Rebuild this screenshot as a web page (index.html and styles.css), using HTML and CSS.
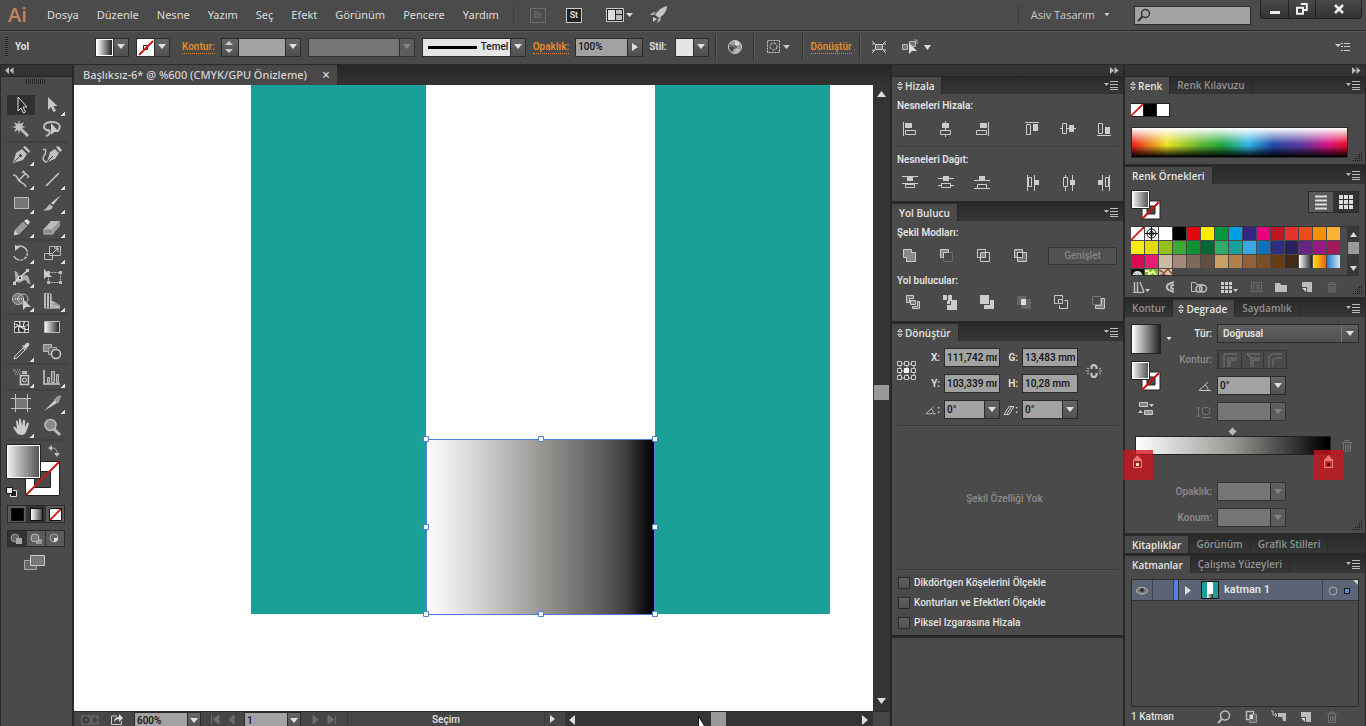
FILE: index.html
```html
<!DOCTYPE html>
<html lang="tr">
<head>
<meta charset="utf-8">
<title>Başlıksız-6</title>
<link rel="stylesheet" href="styles.css">
</head>
<body>
<svg class="defs" width="0" height="0" aria-hidden="true">
  <defs>
    <linearGradient id="gBW"><stop offset="0" stop-color="#fff"/><stop offset="1" stop-color="#222"/></linearGradient>
    <linearGradient id="gSoft"><stop offset="0" stop-color="#eee"/><stop offset="1" stop-color="#555"/></linearGradient>
    <linearGradient id="gArt"><stop offset="0" stop-color="#fff"/><stop offset=".25" stop-color="#cfcfcf"/><stop offset=".5" stop-color="#989793"/><stop offset=".75" stop-color="#626262"/><stop offset=".88" stop-color="#3d3d3d"/><stop offset=".95" stop-color="#151515"/><stop offset="1" stop-color="#000"/></linearGradient>
    <linearGradient id="gFace" x2="0" y2="1"><stop offset="0" stop-color="#7a7a7a"/><stop offset="1" stop-color="#999"/></linearGradient>
  </defs>
  <symbol id="caret" viewBox="0 0 8 6"><path d="M0 0h8L4 5z" fill="currentColor"/></symbol>
  <symbol id="menu" viewBox="0 0 14 9"><path d="M0 2h5L2.500 5z" fill="#bbb"/><path d="M6 .5h8M6 3.500h8M6 6.500h8M6 8.500h8" stroke="#bbb"/></symbol>
  <symbol id="cycle" viewBox="0 0 6 10"><path d="M.8 3.700L3 1l2.200 2.700zM.8 6.300L3 9l2.200-2.700z" fill="none" stroke="#ddd"/></symbol>
  <symbol id="grip" viewBox="0 0 10 10"><path d="M8 0h1v1h-1zM6 2h1v1h-1zM8 2h1v1h-1zM4 4h1v1h-1zM6 4h1v1h-1zM8 4h1v1h-1zM2 6h1v1h-1zM4 6h1v1h-1zM6 6h1v1h-1zM8 6h1v1h-1zM0 8h1v1h-1zM2 8h1v1h-1zM4 8h1v1h-1zM6 8h1v1h-1zM8 8h1v1h-1z" fill="#151515"/></symbol>
  <symbol id="trash" viewBox="0 0 12 13"><path d="M1 3.500h10M4 3V1.500h4V3M2.500 4v8h7V4M4.500 5.500v5M6.500 5.500v5M8 5.500v5" fill="none" stroke="#737373"/></symbol>
  <symbol id="newitem" viewBox="0 0 12 12"><path d="M1 1h10v10H6V6H1z" fill="#bdbdbd"/><path d="M1 7h4v4z" fill="#ddd"/></symbol>
  <symbol id="fs" viewBox="0 0 30 30"><path d="M11 11h18v18H11z" fill="#fff" stroke="#222"/><path d="M16 16h8v8h-8z" fill="#4a4a4a" stroke="#222"/><path d="M11.500 28.500L28 12" stroke="#d01010" stroke-width="2"/><path d="M.5 .5h18v18H.5z" fill="#fff" stroke="#222"/><path d="M2 2h15v15H2z" fill="url(#gSoft)"/></symbol>
  <symbol id="none" viewBox="0 0 14 14"><path d="M0 0h14v14H0z" fill="#fff"/><path d="M0 14L14 0" stroke="#d81818" stroke-width="2"/></symbol>
  <symbol id="angle" viewBox="0 0 14 12"><path d="M1 10.500h12M1 10.500L10 2M7 5c2 1 3 3 3 5" fill="none" stroke="#c8c8c8"/></symbol>
</svg>

<div class="app">
  <header class="menubar">
    <span class="logo">Ai</span>
    <nav class="menus">
      <button>Dosya</button><button>Düzenle</button><button>Nesne</button><button>Yazım</button><button>Seç</button><button>Efekt</button><button>Görünüm</button><button>Pencere</button><button>Yardım</button>
    </nav>
    <div class="apptools">
      <button class="sq dim">Br</button>
      <button class="sq lit">St</button>
      <button aria-label="Düzen" class="arr"><svg width="27" height="16"><path d="M.5 1.500h17v13H.5z" fill="#222" stroke="#ccc"/><path d="M2 3h7v10H2z" fill="#ddd"/><path d="M10 3h6v4h-6zM10 8h6v5h-6z" fill="#bbb"/><path d="M20 6h7l-3.500 4z" fill="#ddd"/></svg></button>
      <button aria-label="Paylaş"><svg width="20" height="18"><path d="M18 0c-5 1-9 4-12 9l4 3c5-3 8-7 8-12z" fill="#c4c4c4"/><path d="M7 6C4 6 2 7 1 9l4 0zM12 11c0 3-1 5-4 6l1-4z" fill="#aaa"/><path d="M4 11l4 2-4 3z" fill="#ccc"/></svg></button>
    </div>
    <div class="account">
      <button class="user">Asiv Tasarım <svg width="6" height="4" viewBox="0 0 8 6"><use href="#caret"/></svg></button>
      <label class="search"><svg width="14" height="14"><circle cx="8.500" cy="5.500" r="4" fill="none" stroke="#333" stroke-width="1.500"/><path d="M5.500 8.500L1 13" stroke="#333" stroke-width="2"/></svg><input type="text" aria-label="Ara"></label>
      <div class="win">
        <button aria-label="Simge durumuna küçült"><svg width="12" height="12"><path d="M1 8h10v3H1z" fill="#eee"/></svg></button>
        <button aria-label="Geri yükle"><svg width="12" height="12"><path d="M4.800 1h6v6h-3M1 4.800h6v6H1z" fill="none" stroke="#eee" stroke-width="2"/></svg></button>
        <button class="close" aria-label="Kapat"><svg width="12" height="12"><path d="M2 2l8 8M10 2l-8 8" stroke="#eee" stroke-width="2.500"/></svg></button>
      </div>
    </div>
  </header>

  <div class="control">
    <span class="dots"></span>
    <span class="kind">Yol</span>
    <span class="drop fillpick"><svg width="17" height="17"><path d="M0 0h17v17H0z" fill="#fff"/><path d="M1 1h15v15H1z" fill="url(#gBW)"/></svg><button aria-label="Dolgu"><svg class="c"><use href="#caret"/></svg></button></span>
    <span class="drop strokepick"><svg width="17" height="17"><path d="M0 0h17v17H0z" fill="#fff"/><path d="M6.500 6.500h4v4h-4z" fill="#fff" stroke="#222"/><path d="M2 16L16 2" stroke="#d01818" stroke-width="2"/></svg><button aria-label="Kontur rengi"><svg class="c"><use href="#caret"/></svg></button></span>
    <a class="link" href="#kontur">Kontur:</a>
    <span class="combo weight"><button class="spin" aria-label="Artır / azalt"><svg width="9" height="14"><path d="M0 5h8L4 1zM0 9h8l-4 4z" fill="#ccc"/></svg></button><input type="text" aria-label="Kontur kalınlığı"><button aria-label="Kalınlık listesi"><svg class="c"><use href="#caret"/></svg></button></span>
    <span class="combo profile off"><input type="text" aria-label="Genişlik profili" disabled><button disabled aria-label="Profil listesi"><svg class="c"><use href="#caret"/></svg></button></span>
    <span class="combo brush"><span class="brushface"><i></i>Temel</span><button aria-label="Fırça"><svg class="c"><use href="#caret"/></svg></button></span>
    <a class="link" href="#opaklik">Opaklık:</a>
    <span class="combo opacity"><input type="text" value="100%" aria-label="Opaklık"><button aria-label="Opaklık kaydırıcısı"><svg width="6" height="8"><path d="M0 0v8l6-4z" fill="#ddd"/></svg></button></span>
    <span class="lbl stil">Stil:</span>
    <span class="drop style"><i></i><button aria-label="Stil"><svg class="c"><use href="#caret"/></svg></button></span>
    <span class="rule"></span>
    <button class="wheel" aria-label="Yeniden renklendir"><svg width="16" height="16"><circle cx="8" cy="8" r="6.500" fill="#999" stroke="#ccc"/><path d="M8 8V2a6 6 0 0 1 5 3z" fill="#ddd"/><path d="M8 8L2 8a6 6 0 0 0 3 5z" fill="#444"/><path d="M8 8l5 3a6 6 0 0 1-5 3z" fill="#bbb"/><path d="M8 8L3 5a6 6 0 0 0-1 3z" fill="#666"/><circle cx="8" cy="8" r="2" fill="#666"/></svg></button>
    <span class="rule"></span>
    <button class="alignto" aria-label="Hizala"><svg width="25" height="16"><path d="M1.500 1.500h12v12h-12z" fill="none" stroke="#ccc" stroke-dasharray="2 1"/><circle cx="7.500" cy="7.500" r="3.500" fill="none" stroke="#ccc" stroke-dasharray="3 1"/><path d="M17 6h7l-3.500 4z" fill="#ccc"/></svg></button>
    <span class="rule"></span>
    <a class="link transform" href="#donustur">Dönüştür</a>
    <span class="rule"></span>
    <button class="isolate" aria-label="Yalıt"><svg width="16" height="14"><path d="M4.500 4.500h7v5h-7z" fill="#777" stroke="#ccc"/><path d="M1 1l3 3M15 1l-3 3M1 13l3-3M15 13l-3-3M1 4h3M12 4h3M1 10h3M12 10h3" stroke="#ccc"/></svg></button>
    <button class="similar" aria-label="Benzerleri seç"><svg width="31" height="16"><path d="M1.500 5.500h5v5h-5zM8.500 2.500h6v5h-6z" fill="#777" stroke="#bbb"/><path d="M8 4v11l3-3 5 0z" fill="#ddd"/><path d="M13 1h3v4" fill="none" stroke="#aaa"/><path d="M23 6h7l-3.500 5z" fill="#ddd"/></svg></button>
    <button class="ctlmenu" aria-label="Menü"><svg width="15" height="10"><path d="M0 2h6L3 5z" fill="#ccc"/><path d="M6 1.500h2M6 4.500h2M6 8.500h2M9 1.500h6M9 4.500h6M9 8.500h6" stroke="#ccc"/></svg></button>
  </div>

  <div class="work">
    <aside class="tools">
      <div class="strip left"><svg width="9" height="7"><path d="M4 0v7L0 3.500zM8.500 0v7l-4-3.500z" fill="#bbb"/></svg></div>
      <div class="handle"></div>
      <div class="toolgrid">
        <button class="on" aria-label="Seçim"><svg viewBox="0 0 20 20"><path d="M7 2v14l3-3 2.500 5 2-1-2.500-5h4z" fill="#2c2c2c" stroke="#ddd"/></svg></button>
        <button class="more" aria-label="Doğrudan Seçim"><svg viewBox="0 0 20 20"><path d="M6 2v13l3-3 2.500 5 2.500-1-2.500-5h4z" fill="#c4c4c4"/></svg></button>
        <button aria-label="Sihirli Değnek"><svg viewBox="0 0 20 20"><path d="M8 1l1 4 4-2-2 4 4 1-4 1 7 7-2 2-7-7-1 4-1-4-4 2 2-4-4-1 4-1-2-4 4 2z" fill="#c0c0c0"/></svg></button>
        <button aria-label="Kement"><svg viewBox="0 0 20 20"><path d="M7 12c-8-2-6-9 3-9 8 0 10 6 5 9M6 11c3 1 2 5-2 6" fill="none" stroke="#bbb" stroke-width="2"/><path d="M9 4v12l3-3h5z" fill="#ccc"/></svg></button>
      </div>
      <div class="toolgrid">
        <button class="more" aria-label="Kalem"><svg viewBox="0 0 20 20"><path d="M2 18L5 8l6-4 5 5-4 6z" fill="#c0c0c0"/><path d="M12 2l2-1 5 5-1 2z" fill="#ccc"/><path d="M3 17l6-6" stroke="#444"/><circle cx="9.500" cy="10.500" r="1.500" fill="#444"/></svg></button>
        <button aria-label="Eğrilik"><svg viewBox="0 0 20 20"><path d="M5 17L8 7l5-3 4 4-4 6z" fill="#c0c0c0"/><path d="M14 2l2-1 4 4-2 2z" fill="#ccc"/><path d="M6 16l5-5" stroke="#444"/><path d="M1 5c4-3 3 3 1 6s0 6 3 6" fill="none" stroke="#bbb" stroke-width="1.500"/></svg></button>
        <button class="more" aria-label="Yol Üzerinde Yazı"><svg viewBox="0 0 20 20"><path d="M2 6c5 0 4 4 6 6s6 2 7 6M8 11l7-7M12 2l6 6M6 9l4 4M11 4l2-2M16 9l2-2" fill="none" stroke="#c0c0c0" stroke-width="1.500"/></svg></button>
        <button class="more" aria-label="Çizgi"><svg viewBox="0 0 20 20"><path d="M4 17L17 4" stroke="#c8c8c8" stroke-width="1.500"/></svg></button>
        <button class="more" aria-label="Dikdörtgen"><svg viewBox="0 0 20 20"><path d="M3.500 4.500h14v11h-14z" fill="#777" stroke="#bbb"/></svg></button>
        <button class="more" aria-label="Boya Fırçası"><svg viewBox="0 0 20 20"><path d="M19 2L9 10l2 2z" fill="#ccc"/><path d="M8 11l3 3c-2 4-6 4-10 3 4-1 4-4 7-6z" fill="#b8b8b8"/></svg></button>
        <button class="more" aria-label="Kurşun Kalem"><svg viewBox="0 0 20 20"><path d="M3 18l1-5 8-8 4 4-8 8z" fill="#999" stroke="#bbb" stroke-width=".5"/><path d="M13 4l3-2 3 3-2 3z" fill="#ddd"/><path d="M3 18l1-4 3 3z" fill="#ddd"/></svg></button>
        <button class="more" aria-label="Silgi"><svg viewBox="0 0 20 20"><path d="M2 12l7-8h9l-7 8z" fill="#bbb"/><path d="M2 12h9v5H2z" fill="#888" stroke="#bbb"/><path d="M11 12l7-8v5l-7 8z" fill="#999"/></svg></button>
      </div>
      <div class="toolgrid">
        <button class="more" aria-label="Döndür"><svg viewBox="0 0 20 20"><path d="M6 4a7 7 0 1 1-3 9" fill="none" stroke="#c0c0c0" stroke-width="1.500" stroke-dasharray="13 1 3 1 3 1 3 1"/><path d="M4 2v6l5-4z" fill="#ccc"/></svg></button>
        <button class="more" aria-label="Ölçekle"><svg viewBox="0 0 20 20"><path d="M7.500 3.500h11v9h-11zM2.500 10.500h8v6h-8z" fill="none" stroke="#bbb"/><path d="M11 10l5-5M12 5h4v4" fill="none" stroke="#ddd"/></svg></button>
        <button class="more" aria-label="Genişlik"><svg viewBox="0 0 20 20"><path d="M3 4c6 0 3 6 6 6s5-4 8-1c2 3 1 6 3 8-5 0-4-4-6-4s-5 4-8 2-1-7-3-11z" fill="#aaa"/><path d="M3 16L16 4" stroke="#ddd" stroke-width="1.500"/><path d="M2 15h3v3H2zM15 2h3v3h-3z" fill="#ccc"/><circle cx="9" cy="11" r="2" fill="#444" stroke="#fff"/></svg></button>
        <button aria-label="Serbest Dönüştür"><svg viewBox="0 0 20 20"><path d="M6.500 5.500h12v10h-12z" fill="none" stroke="#bbb" stroke-dasharray="2 1"/><path d="M5 4h3v3H5zM17 4h3v3h-3zM5 14h3v3H5zM17 14h3v3h-3z" fill="#bbb"/><path d="M2 2v10l2-2h6z" fill="#ccc"/></svg></button>
        <button class="more" aria-label="Şekil Oluşturucu"><svg viewBox="0 0 20 20"><circle cx="7" cy="8" r="5.500" fill="#777" stroke="#bbb"/><circle cx="12" cy="8" r="5" fill="none" stroke="#bbb"/><path d="M4 8h9" stroke="#fff" stroke-dasharray="1 1"/><path d="M12 8v11l3-3h5z" fill="#ccc"/></svg></button>
        <button class="more" aria-label="Perspektif Izgarası"><svg viewBox="0 0 20 20"><path d="M2 2h7v7l9 5v3H2z" fill="#999"/><path d="M3 2v15h15M6 3v14M9 3v14M3 6l6 1M3 9l10 3M3 13l14 3" fill="none" stroke="#d0d0d0"/><path d="M4.500 3v14M7.500 3v14" stroke="#444"/></svg></button>
      </div>
      <div class="toolgrid">
        <button aria-label="Kafes"><svg viewBox="0 0 20 20"><path d="M3.500 4.500h14v11h-14z" fill="#333" stroke="#ccc"/><path d="M4 11c4-6 9 3 13-4M4 7c4 0 10 8 13 5M8 5c4 3-4 7 1 10M14 5c-5 3 3 7-1 10" fill="none" stroke="#ddd" stroke-width="1.200"/></svg></button>
        <button aria-label="Degrade"><svg viewBox="0 0 20 20"><path d="M2.500 4.500h15v11h-15z" fill="url(#gBW)" stroke="#bbb"/></svg></button>
        <button class="more" aria-label="Damlalık"><svg viewBox="0 0 20 20"><path d="M3 18l1-3 8-8 2 2-8 8z" fill="#555" stroke="#ccc"/><path d="M11 5l1-1 1 1c1-3 4-4 5-3s0 4-3 5l1 1-1 1z" fill="#ccc"/></svg></button>
        <button aria-label="Karışım"><svg viewBox="0 0 20 20"><path d="M1.500 3.500h8v7h-8z" fill="#888" stroke="#bbb"/><path d="M6.500 6.500h8v7h-8z" fill="#666" stroke="#aaa"/><circle cx="14" cy="13" r="4.500" fill="#444" stroke="#ccc" stroke-width="1.500"/></svg></button>
      </div>
      <div class="toolgrid">
        <button class="more" aria-label="Sembol Püskürtücü"><svg viewBox="0 0 20 20"><path d="M9.500 8.500h8v9h-8z" fill="none" stroke="#ccc" stroke-width="1.500"/><path d="M11 4h5v3h-5z" fill="#bbb"/><circle cx="13.500" cy="13" r="2" fill="none" stroke="#ddd"/><path d="M2 3h8M3 5h7M4 7h5" stroke="#bbb" stroke-dasharray="1 1"/></svg></button>
        <button class="more" aria-label="Sütun Grafik"><svg viewBox="0 0 20 20"><path d="M2 3v14h16" fill="none" stroke="#ccc" stroke-width="1.500"/><path d="M5.500 10.500h2v5h-2zM9.500 4.500h3v11h-3zM14.500 7.500h2v8h-2z" fill="#777" stroke="#bbb"/></svg></button>
      </div>
      <div class="toolgrid">
        <button aria-label="Çalışma Yüzeyi"><svg viewBox="0 0 20 20"><path d="M4.500 5.500h12v10h-12z" fill="#777"/><path d="M4.500 1v18M16.500 1v18M0 5.500h20M0 15.500h20" stroke="#c0c0c0"/></svg></button>
        <button class="more" aria-label="Dilimleme"><svg viewBox="0 0 20 20"><path d="M2 18L13 7l2 3z" fill="#ccc"/><path d="M12 7l4-4 3 0-3 7z" fill="#999" stroke="#bbb" stroke-width=".5"/></svg></button>
        <button class="more" aria-label="El"><svg viewBox="0 0 20 20"><path d="M2 10c2-1 3 1 4 2L5 5c0-2 2-2 2 0l1 4V3c0-2 2-2 2 0l1 6 1-5c0-2 2-1 2 0v6l2-4c1-1 2 0 2 1l-3 8c-1 4-8 4-10 0z" fill="#ccc"/></svg></button>
        <button aria-label="Yakınlaştır"><svg viewBox="0 0 20 20"><circle cx="8.500" cy="8" r="5.500" fill="#888" stroke="#bbb" stroke-width="1.500"/><path d="M12 12l6 6" stroke="#bbb" stroke-width="3"/></svg></button>
      </div>
      <svg class="fillstroke" width="60" height="56"><path d="M19.500 17.500h34v34h-34z" fill="#fff" stroke="#222"/><path d="M28.500 27.500h16v16h-16z" fill="#4a4a4a" stroke="#222"/><path d="M20 51L53 18" stroke="#c81818" stroke-width="2"/><path d="M.5 .5h34v34H.5z" fill="#fff" stroke="#222"/><path d="M2 2h31v31H2z" fill="url(#gSoft)"/><path d="M46 4c4 0 5 2 5 6" fill="none" stroke="#bbb"/><path d="M42 4l4-3v6zM48 9h6l-3 4z" fill="#bbb"/><path d="M4.500 46.500h6v6h-6z" fill="#222" stroke="#ddd"/><path d="M.5 43.500h6v6h-6z" fill="#eee" stroke="#111"/></svg>
      <div class="paints">
        <button aria-label="Renk"><i class="black"></i></button><button class="sel" aria-label="Degrade"><i class="grad"></i></button><button aria-label="Hiçbiri"><svg width="13" height="13"><use href="#none" width="13" height="13"/><path d="M.5 .5h12v12H.5z" fill="none" stroke="#111"/></svg></button>
      </div>
      <div class="paints modes">
        <button class="sel" aria-label="Normal Çiz"><svg width="14" height="12"><circle cx="5" cy="5" r="4" fill="#666" stroke="#999"/><path d="M6 5h6v6H6z" fill="#aaa"/></svg></button><button aria-label="Arkaya Çiz"><svg width="14" height="12"><path d="M7 6h6v5H7z" fill="#999"/><circle cx="6" cy="5" r="4" fill="#777" stroke="#bbb"/></svg></button><button aria-label="İçe Çiz"><svg width="14" height="12"><circle cx="6" cy="5" r="4" fill="#666" stroke="#aaa"/><path d="M6 5h4c0 2-2 4-4 4z" fill="#ddd"/></svg></button>
      </div>
      <button class="screen" aria-label="Ekran Modu"><svg width="22" height="17"><path d="M.5 6.500h12v9H.5z" fill="#666" stroke="#aaa"/><path d="M6.500 1.500h14v10h-14z" fill="#777" stroke="#ccc"/></svg></button>
    </aside>

    <main class="doc">
      <div class="doctabs"><div class="doctab">Başlıksız-6* @ %600 (CMYK/GPU Önizleme)<button aria-label="Belgeyi kapat">×</button></div></div>
      <div class="view">
        <div class="canvas">
          <svg class="art" width="586" height="534"><path d="M0 0h175v529H0zM404 0h175v529H404z" fill="#1aa098"/><path d="M175.500 354.500h228v175h-228z" fill="url(#gArt)" stroke="#4f80d8"/><g fill="#fff" stroke="#4f80d8"><path d="M172.500 351.500h5v5h-5zM287.500 351.500h5v5h-5zM401.500 351.500h5v5h-5zM172.500 439.500h5v5h-5zM401.500 439.500h5v5h-5zM172.500 526.500h5v5h-5zM287.500 526.500h5v5h-5zM401.500 526.500h5v5h-5z"/></g></svg>
        </div>
        <div class="vscroll"><svg width="9" height="7"><path d="M0 6h9L4.500 0z" fill="#ddd"/></svg><i></i><svg width="9" height="7"><path d="M0 0h9L4.500 6z" fill="#ddd"/></svg></div>
      </div>
      <div class="status">
        <svg width="20" height="14" class="s1"><path d="M1 3h18v10H1z" fill="#5d5d5d"/><circle cx="6" cy="8" r="2.500" fill="none" stroke="#333" stroke-width="1.500"/><path d="M12 8h6M15 5v6" stroke="#333"/></svg>
        <svg width="14" height="14" class="s2"><path d="M7 4H1.500v8.500h10V9" fill="none" stroke="#ccc"/><path d="M4 10c0-4 3-5 5-5V2l4 4-4 4V7c-2 0-4 1-5 3z" fill="#ddd"/></svg>
        <span class="combo zoomf"><input type="text" value="600%" aria-label="Yakınlaştırma"><button aria-label="Yakınlaştırma listesi"><svg class="c"><use href="#caret"/></svg></button></span>
        <svg width="25" height="14" class="nav"><path d="M1.500 3v9M9 3v9L3 7.500zM24 3v9l-5-4.500z" fill="#6c6c6c" stroke="#6c6c6c"/></svg>
        <span class="combo pagef"><input type="text" value="1" aria-label="Çalışma yüzeyi"><button aria-label="Çalışma yüzeyi listesi"><svg class="c"><use href="#caret"/></svg></button></span>
        <svg width="28" height="14" class="nav"><path d="M3 3v9l5-4.500zM18 3v9l6-4.500zM25.500 3v9" fill="#6c6c6c" stroke="#6c6c6c"/></svg>
        <span class="tool">Seçim</span>
        <svg width="20" height="14" class="tri"><path d="M5 3v8l5-4z" fill="#ddd"/></svg>
        <div class="hscroll"><svg width="6" height="10"><path d="M6 0v10L0 5z" fill="#ddd"/></svg><i></i><svg width="6" height="10"><path d="M0 0v10l6-5z" fill="#ddd"/></svg></div>
        <svg class="cursor" width="12" height="14"><path d="M1.500 1v15h9z" fill="#fff" stroke="#111"/></svg>
      </div>
    </main>

    <section class="col colA">
      <div class="strip"><svg width="9" height="7"><path d="M0 0v7l4-3.500zM4.500 0v7l4-3.500z" fill="#bbb"/></svg></div>
      <section class="panel">
        <div class="tabs"><button class="tab act"><svg width="6" height="10"><use href="#cycle"/></svg>Hizala</button><button class="pm" aria-label="Menü"><svg width="14" height="9"><use href="#menu"/></svg></button></div>
        <div class="body align">
          <div class="lbl">Nesneleri Hizala:</div>
          <div class="row split">
            <div><svg viewBox="0 0 18 18"><path d="M2.500 2v14" stroke="#ccc"/><path d="M4 3h7v5H4z" fill="#ccc"/><path d="M4.500 10.500h10v4h-10z" fill="none" stroke="#ccc"/></svg><svg viewBox="0 0 18 18"><path d="M8.500 1v16" stroke="#ccc"/><path d="M5 3h7v5H5z" fill="#ccc"/><path d="M3.500 10.500h10v4h-10z" fill="#4a4a4a" stroke="#ccc"/></svg><svg viewBox="0 0 18 18"><path d="M15.500 2v14" stroke="#ccc"/><path d="M7 3h7v5H7z" fill="#ccc"/><path d="M3.500 10.500h10v4h-10z" fill="none" stroke="#ccc"/></svg></div>
            <div><svg viewBox="0 0 18 18"><path d="M1 2.500h14" stroke="#ccc"/><path d="M2.500 4.500h4v10h-4z" fill="none" stroke="#ccc"/><path d="M9 4h5v7H9z" fill="#ccc"/></svg><svg viewBox="0 0 18 18"><path d="M0 8.500h16" stroke="#ccc"/><path d="M2.500 3.500h4v10h-4z" fill="#4a4a4a" stroke="#ccc"/><path d="M9 5h5v7H9z" fill="#ccc"/></svg><svg viewBox="0 0 18 18"><path d="M1 15.500h14" stroke="#ccc"/><path d="M2.500 3.500h4v10h-4z" fill="none" stroke="#ccc"/><path d="M9 7h5v7H9z" fill="#ccc"/></svg></div>
          </div>
          <hr>
          <div class="lbl">Nesneleri Dağıt:</div>
          <div class="row split">
            <div><svg viewBox="0 0 18 18"><path d="M1 2.500h16M1 9.500h16" stroke="#ccc"/><path d="M6 3h6v4H6z" fill="#ccc"/><path d="M4.500 10.500h9v3h-9z" fill="none" stroke="#ccc"/></svg><svg viewBox="0 0 18 18"><path d="M1 4.500h16M1 11.500h16" stroke="#ccc"/><path d="M6 2h6v5H6z" fill="#ccc"/><path d="M4.500 9.500h9v4h-9z" fill="#4a4a4a" stroke="#ccc"/></svg><svg viewBox="0 0 18 18"><path d="M1 6.500h16M1 14.500h16" stroke="#ccc"/><path d="M6 2h6v4H6z" fill="#ccc"/><path d="M4.500 10.500h9v4h-9z" fill="none" stroke="#ccc"/></svg></div>
            <div><svg viewBox="0 0 18 18"><path d="M3.500 1v16M10.500 1v16" stroke="#ccc"/><path d="M4.500 3.500h3v9h-3z" fill="none" stroke="#ccc"/><path d="M11 6h4v5h-4z" fill="#ccc"/></svg><svg viewBox="0 0 18 18"><path d="M5.500 1v16M12.500 1v16" stroke="#ccc"/><path d="M3.500 3.500h4v9h-4z" fill="#4a4a4a" stroke="#ccc"/><path d="M10 6h5v5h-5z" fill="#ccc"/></svg><svg viewBox="0 0 18 18"><path d="M6.500 1v16M13.500 1v16" stroke="#ccc"/><path d="M2 6h4v5H2z" fill="#ccc"/><path d="M9.500 3.500h3v9h-3z" fill="none" stroke="#ccc"/></svg></div>
          </div>
        </div>
      </section>
      <section class="panel">
        <div class="tabs"><button class="tab act">Yol Bulucu</button><button class="pm" aria-label="Menü"><svg width="14" height="9"><use href="#menu"/></svg></button></div>
        <div class="body path">
          <div class="lbl">Şekil Modları:</div>
          <div class="row shapes">
            <svg viewBox="0 0 18 18"><path d="M3.500 2.500h8v3h4v9h-9v-4h-3z" fill="#888" stroke="#ccc"/></svg>
            <svg viewBox="0 0 18 18"><path d="M6.500 5.500h9v9h-9z" fill="none" stroke="#6a6a6a"/><path d="M3.500 2.500h8v3h-5v5h-3z" fill="#888" stroke="#ccc"/></svg>
            <svg viewBox="0 0 18 18"><path d="M3.500 2.500h8v8h-8zM6.500 5.500h9v9h-9z" fill="none" stroke="#ccc"/><path d="M7 6h4v4H7z" fill="#888"/></svg>
            <svg viewBox="0 0 18 18"><path d="M3.500 2.500h8v8h-8zM6.500 5.500h9v9h-9z" fill="#777" stroke="#ccc"/><path d="M6.500 5.500h5v5h-5z" fill="#333" stroke="#ccc"/></svg>
            <button class="expand" disabled>Genişlet</button>
          </div>
          <div class="lbl second">Yol bulucular:</div>
          <div class="row finders">
            <svg viewBox="0 0 18 18"><path d="M2.500 1.500h7v3h-4v4h-3zM6.500 6.500h5v4h-5zM13.500 7.500h2v7h-7v-2h5z" fill="#777" stroke="#ccc"/></svg>
            <svg viewBox="0 0 18 18"><path d="M2 1h4v5H2zM7 1h4v5h5v10H6V11h4V7H7zM6 7h3v3H6z" fill="#ccc"/></svg>
            <svg viewBox="0 0 18 18"><path d="M2 1h9v9H2zM12 6h4v9H6v-4h6z" fill="#ccc"/></svg>
            <svg viewBox="0 0 18 18"><path d="M2 2h9v9H2zM6 5h10v10H6z" fill="#666"/><path d="M6 5h5v6H6z" fill="#ddd"/></svg>
            <svg viewBox="0 0 18 18"><path d="M5.500 9.500h-3v-8h8v3M6.500 5.500h4v4h-4zM12.500 6.500h3v8h-8v-3" fill="none" stroke="#ccc"/></svg>
            <svg viewBox="0 0 18 18"><path d="M3.500 2.500h8v8h-8z" fill="none" stroke="#777"/><path d="M12.500 4.500h3v10h-9v-3h6z" fill="#777" stroke="#ccc"/></svg>
          </div>
        </div>
      </section>
      <section class="panel">
        <div class="tabs"><button class="tab act"><svg width="6" height="10"><use href="#cycle"/></svg>Dönüştür</button><button class="pm" aria-label="Menü"><svg width="14" height="9"><use href="#menu"/></svg></button></div>
        <div class="body trans">
          <div class="tgrid">
            <svg class="ref" width="20" height="20"><path d="M3 3h14v14H3zM10 3v4M3 10h4M17 10h-4M10 17v-4" fill="none" stroke="#ccc"/><path d="M.5 .5h4v4h-4zM7.500 .5h4v4h-4zM14.500 .5h4v4h-4zM.5 7.500h4v4h-4zM14.500 7.500h4v4h-4zM.5 14.500h4v4h-4zM7.500 14.500h4v4h-4zM14.500 14.500h4v4h-4z" fill="#444" stroke="#ccc"/><path d="M7 7h5v5H7z" fill="#eee"/></svg>
            <label for="fx">X:</label><input id="fx" type="text" value="111,742 mm"><label for="fw">G:</label><input id="fw" type="text" value="13,483 mm">
            <svg class="chain" width="16" height="16"><path d="M5.500 6V4.500a2.500 2.500 0 0 1 5 0V6M5.500 10v1.500a2.500 2.500 0 0 0 5 0V10" fill="none" stroke="#ccc" stroke-width="2"/><path d="M1 5l2 1M0 8h3M1 11l2-1M15 5l-2 1M16 8h-3M15 11l-2-1" stroke="#bbb"/></svg>
            <label for="fy">Y:</label><input id="fy" type="text" value="103,339 mm"><label for="fh">H:</label><input id="fh" type="text" value="10,28 mm">
            <label for="fa"><svg width="12" height="10" viewBox="0 0 14 12"><use href="#angle"/></svg>:</label><span class="combo"><input id="fa" type="text" value="0°"><button aria-label="Açı listesi"><svg class="c"><use href="#caret"/></svg></button></span>
            <label for="fs2"><svg width="12" height="10"><path d="M1 9.500h5l5-8H6zM4 9l5-8" fill="none" stroke="#ccc"/></svg>:</label><span class="combo"><input id="fs2" type="text" value="0°"><button aria-label="Eğme listesi"><svg class="c"><use href="#caret"/></svg></button></span>
          </div>
          <hr>
          <div class="empty">Şekil Özelliği Yok</div>
          <hr>
          <div class="checks">
            <label><input type="checkbox">Dikdörtgen Köşelerini Ölçekle</label>
            <label><input type="checkbox">Konturları ve Efektleri Ölçekle</label>
            <label><input type="checkbox">Piksel Izgarasına Hizala</label>
          </div>
        </div>
      </section>
    </section>

    <section class="col colB">
      <div class="strip"><svg width="9" height="7"><path d="M0 0v7l4-3.500zM4.500 0v7l4-3.500z" fill="#bbb"/></svg></div>
      <section class="panel">
        <div class="tabs"><button class="tab act"><svg width="6" height="10"><use href="#cycle"/></svg>Renk</button><button class="tab">Renk Kılavuzu</button><button class="pm" aria-label="Menü"><svg width="14" height="9"><use href="#menu"/></svg></button></div>
        <div class="body color">
          <div class="chips"><svg width="12" height="12"><use href="#none"/></svg><i class="black"></i><i class="white"></i></div>
          <div class="spectrum"></div>
          <svg class="grip" width="10" height="10"><use href="#grip"/></svg>
        </div>
      </section>
      <section class="panel">
        <div class="tabs"><button class="tab act">Renk Örnekleri</button><button class="pm" aria-label="Menü"><svg width="14" height="9"><use href="#menu"/></svg></button></div>
        <div class="body swatches">
          <div class="swtop"><svg width="30" height="30"><use href="#fs"/></svg>
            <div class="views"><button aria-label="Liste"><svg width="14" height="16"><path d="M1 2.500h12M1 6.500h12M1 10.500h12M1 14.500h12" stroke="#ddd" stroke-width="2"/></svg></button><button class="sel" aria-label="Küçük resim"><svg width="14" height="14"><path d="M0 2h14M0 7h14M0 12h14" stroke="#ddd" stroke-width="4" stroke-dasharray="4 1"/></svg></button></div></div>
          <div class="swwrap">
            <div class="swgrid">
              <svg width="13" height="13"><use href="#none"/></svg><svg width="13" height="13"><path d="M0 0h13v13H0z" fill="#eee"/><circle cx="6.500" cy="6.500" r="4.500" fill="none" stroke="#111"/><circle cx="6.500" cy="6.500" r="2" fill="none" stroke="#111"/><path d="M6.500 0v13M0 6.500h13" stroke="#111"/></svg>
              <i class="k1"></i><i class="k2"></i><i class="k3"></i><i class="k4"></i><i class="k5"></i><i class="k6"></i><i class="k7"></i><i class="k8"></i><i class="k9"></i><i class="k10"></i><i class="k11"></i><i class="k12"></i><i class="k13"></i>
              <i class="k14"></i><i class="k15"></i><i class="k16"></i><i class="k17"></i><i class="k18"></i><i class="k19"></i><i class="k20"></i><i class="k21"></i><i class="k22"></i><i class="k23"></i><i class="k24"></i><i class="k25"></i><i class="k26"></i><i class="k27"></i><i class="k28"></i>
              <i class="k29"></i><i class="k30"></i><i class="k31"></i><i class="k32"></i><i class="k33"></i><i class="k34"></i><i class="k35"></i><i class="k36"></i><i class="k37"></i><i class="k38"></i><i class="k39"></i><i class="k40"></i><i class="k41"></i><i class="k42"></i><i class="k43"></i>
              <svg width="13" height="13"><path d="M0 0h13v13H0z" fill="#111"/><circle cx="6.500" cy="7" r="5" fill="#ddd"/><path d="M3 5h7M3 8h7" stroke="#999" stroke-dasharray="2 1"/></svg><svg width="13" height="13"><path d="M0 0h13v13H0z" fill="#7ab82c"/><path d="M0 2h3l2 3 3-3 3 4M0 8l4-2 4 3" stroke="#eef8b0" stroke-width="2" fill="none"/></svg><svg width="13" height="13"><path d="M0 0h13v13H0z" fill="#d8c4b0"/><path d="M0 1l5 3 4-4 4 5M0 7l5-2 5 4" stroke="#8a5030" stroke-width="1.500" fill="none"/></svg>
            </div>
            <div class="swscroll"><svg width="7" height="5"><path d="M0 5h7L3.500 0z" fill="#ddd"/></svg><i></i><svg width="7" height="5"><path d="M0 0h7L3.500 5z" fill="#ddd"/></svg></div>
          </div>
          <div class="foot">
            <svg width="18" height="12"><path d="M1.500 1v10M4.500 1v10M7 1l4 10M0 11.500h11" stroke="#bbb" stroke-width="1.500"/><path d="M12 8h5l-2.500 3z" fill="#ccc"/></svg>
            <svg width="12" height="12"><path d="M10 1L5 3C2 4 2 8 5 9l5 2M10 4c-4 0-4 4 0 4" fill="none" stroke="#bbb" stroke-width="2"/></svg>
            <svg width="18" height="12"><path d="M8 10.500H1.500v-9h4l1 2h6" fill="none" stroke="#bbb"/><circle cx="9" cy="8" r="3" fill="none" stroke="#bbb" stroke-width="1.500"/><circle cx="13" cy="7.500" r="3.500" fill="none" stroke="#bbb" stroke-width="1.500"/></svg>
            <svg width="17" height="12"><path d="M0 2.500h11M0 6.500h11M0 10.500h11" stroke="#ccc" stroke-width="3" stroke-dasharray="3 1"/><path d="M12 8h5l-2.500 3z" fill="#ccc"/></svg>
            <svg width="11" height="12"><path d="M.5 1.500h10v9H.5zM2 4h2M2 6h2M2 8h2M5 4h4M5 6h4M5 8h4" fill="none" stroke="#6c6c6c"/></svg>
            <svg width="12" height="12"><path d="M0 2h5l1 2h6v7H0z" fill="#bdbdbd"/></svg>
            <svg width="12" height="12"><use href="#newitem"/></svg>
            <svg width="12" height="12" viewBox="0 0 12 13"><use href="#trash"/></svg>
          </div>
          <svg class="grip" width="10" height="10"><use href="#grip"/></svg>
        </div>
      </section>
      <section class="panel">
        <div class="tabs"><button class="tab">Kontur</button><button class="tab act"><svg width="6" height="10"><use href="#cycle"/></svg>Degrade</button><button class="tab">Saydamlık</button><button class="pm" aria-label="Menü"><svg width="14" height="9"><use href="#menu"/></svg></button></div>
        <div class="body gradient">
          <div class="gtop">
            <div class="gleft">
              <div class="gprev"><i></i><svg width="6" height="4" viewBox="0 0 8 6"><use href="#caret"/></svg></div>
              <svg width="30" height="30"><use href="#fs"/></svg>
              <svg class="rev" width="16" height="13"><path d="M1.500 .5h8v4h-8zM6.500 8.500h8v4h-8z" fill="url(#gFace)" stroke="#ccc"/><path d="M11 2h5l-2.500 3zM0 11h5L2.500 8z" fill="#ccc"/></svg>
            </div>
            <div class="gform">
              <label for="gt">Tür:</label><span class="sel-wrap"><select id="gt"><option>Doğrusal</option></select><svg class="c"><use href="#caret"/></svg></span>
              <span class="dimlbl">Kontur:</span><span class="three"><button disabled aria-label="Kontur içinde"><svg width="18" height="16"><path d="M3 15V2h13M7 15V6h9M9 15V8h7" fill="none" stroke="#777"/></svg></button><button disabled aria-label="Kontur boyunca"><svg width="18" height="16"><path d="M3 2h13M3 2l4 4M7 15V6h9M9 15V8h7" fill="none" stroke="#777"/></svg></button><button disabled aria-label="Konturun karşısında"><svg width="18" height="16"><path d="M3 15V5l3-3h10M7 15V8l2-2h7" fill="none" stroke="#777"/></svg></button></span>
              <label for="ga"><svg width="14" height="12"><use href="#angle"/></svg></label><span class="combo"><input id="ga" type="text" value="0°"><button aria-label="Açı listesi"><svg class="c"><use href="#caret"/></svg></button></span>
              <label for="gr"><svg width="16" height="14"><path d="M2.500 2v10M1 3.500L2.500 2 4 3.500M1 10.500L2.500 12 4 10.500M6 12.500h9" fill="none" stroke="#777"/><circle cx="10" cy="6" r="4" fill="none" stroke="#777"/></svg></label><span class="combo off"><input id="gr" type="text" disabled><button disabled aria-label="En boy oranı listesi"><svg class="c"><use href="#caret"/></svg></button></span>
            </div>
          </div>
          <div class="slider">
            <svg class="diamond" width="9" height="9"><path d="M4.500 .5l4 4-4 4-4-4z" fill="#bbb" stroke="#777"/></svg>
            <div class="barrow"><div class="bar"></div><svg width="12" height="13"><use href="#trash"/></svg></div>
            <span class="hot a"><svg width="10" height="14"><path d="M.5 5.500h8v7h-8z" fill="#a02020" stroke="#f08080"/><path d="M0 5l4.500-5L9 5z" fill="#f07070"/><path d="M3 8h3v3H3z" fill="#ffd0d0"/></svg></span>
            <span class="hot b"><svg width="10" height="14"><path d="M.5 5.500h8v7h-8z" fill="#c03030" stroke="#f08080"/><path d="M0 5l4.500-5L9 5z" fill="#f07070"/><path d="M3 8h3v3H3z" fill="#500"/></svg></span>
          </div>
          <div class="gform low">
            <label class="dimlbl" for="go">Opaklık:</label><span class="combo off"><input id="go" type="text" disabled><button disabled aria-label="Opaklık listesi"><svg class="c"><use href="#caret"/></svg></button></span>
            <label class="dimlbl" for="gk">Konum:</label><span class="combo off"><input id="gk" type="text" disabled><button disabled aria-label="Konum listesi"><svg class="c"><use href="#caret"/></svg></button></span>
          </div>
          <svg class="grip" width="10" height="10"><use href="#grip"/></svg>
        </div>
      </section>
      <section class="panel">
        <div class="tabs"><button class="tab act">Kitaplıklar</button><button class="tab">Görünüm</button><button class="tab">Grafik Stilleri</button></div>
      </section>
      <section class="panel layers">
        <div class="tabs"><button class="tab act">Katmanlar</button><button class="tab">Çalışma Yüzeyleri</button><button class="pm" aria-label="Menü"><svg width="14" height="9"><use href="#menu"/></svg></button></div>
        <div class="body lay">
          <div class="laylist">
            <div class="layer">
              <span class="eye"><svg width="12" height="10"><path d="M0 6c2-5 10-5 12 0-2 4-10 4-12 0z" fill="#777" stroke="#bbb"/><circle cx="6" cy="5" r="2" fill="#333"/></svg></span>
              <span class="lock"></span><span class="tint"></span>
              <svg width="6" height="9" class="tw"><path d="M0 0v9l6-4.500z" fill="#ddd"/></svg>
              <svg width="18" height="18" class="thumb"><path d="M.5 .5h17v17H.5z" fill="#1aa098" stroke="#111"/><path d="M6 1h6v12H6z" fill="#fff"/><path d="M6 13h6v4H6z" fill="url(#gBW)"/></svg>
              <span class="lname">katman 1</span>
              <span class="target"><svg width="31" height="20"><circle cx="6" cy="11" r="4" fill="none" stroke="#aaa"/><path d="M17.500 8.500h5v5h-5z" fill="#5a86f0" stroke="#111"/><path d="M26 0h5v5z" fill="#ccc"/></svg></span>
            </div>
          </div>
          <div class="layfoot"><span>1 Katman</span>
            <svg width="14" height="14"><circle cx="8" cy="5.500" r="4.500" fill="none" stroke="#bbb" stroke-width="1.500"/><path d="M5 9l-4 4" stroke="#bbb" stroke-width="2"/></svg>
            <svg width="12" height="14"><path d="M1.500 1.500h7v8h-7z" fill="none" stroke="#bbb" stroke-width="1.500"/><path d="M4.500 4.500h7v8h-7z" fill="#666" stroke="#999"/><path d="M5 5h3v4H5z" fill="#ddd"/></svg>
            <svg width="15" height="14"><path d="M0 1h2v4h3M4 3l2 2-2 2" fill="none" stroke="#bbb"/><path d="M7 3h8v8h-3l-1-4H7z" fill="#bbb"/></svg>
            <svg width="12" height="14"><use href="#newitem"/></svg>
            <svg width="12" height="14"><use href="#trash"/></svg>
          </div>
        </div>
      </section>
    </section>
  </div>
</div>
</body>
</html>
```
FILE: styles.css
```css
* { box-sizing: border-box; }
html, body { height: 100%; }
body { margin: 0; overflow: hidden; background: #4a4a4a; color: #e2e2e2; font: 500 10px/16px Roboto, "Noto Sans", sans-serif; }
button, input, select { font: inherit; color: inherit; border: 0; padding: 0; margin: 0; background: none; border-radius: 0; min-width: 0; }
button { display: inline-flex; align-items: center; justify-content: center; }
svg { display: block; flex: none; }
i { display: block; flex: none; }
.defs { position: absolute; }
hr { width: 100%; border: 0; border-top: 1px solid #3c3c3c; border-bottom: 1px solid #525252; margin: 0; }
.c { width: 8px; height: 6px; color: #e0e0e0; }

.app { height: 100vh; display: flex; flex-direction: column; }

/* menu bar */
.menubar { flex: none; height: 31px; display: flex; align-items: center; border-bottom: 1px solid #2a2a2a; background: #4b4b4b; }
.logo { width: 39px; padding-left: 8px; color: #c4835c; font: 600 20px/28px "Open Sans", sans-serif; }
.menus { display: flex; margin-left: 8px; gap: 18px; color: #dcdcdc; font: 400 11px/16px "Noto Sans", sans-serif; }
.apptools { display: flex; align-items: center; margin-left: 14px; padding-left: 16px; border-left: 1px solid #3d3d3d; gap: 20px; }
.sq { width: 16px; height: 15px; border: 1px solid #ccc; background: #222; font-size: 9px; font-weight: 600; }
.sq.dim { border-color: #6c6c6c; background: none; color: #6c6c6c; }
.apptools .arr { margin-left: 4px; margin-right: -4px; }
.account { margin-left: auto; display: flex; align-self: stretch; align-items: center; }
.user { border-left: 1px solid #3b3b3b; padding: 0 24px 0 12px; gap: 9px; font: 400 11px/20px "Open Sans", sans-serif; color: #ccc; }
.search { display: flex; align-items: center; width: 117px; height: 19px; background: #a3a3a3; border: 1px solid #2c2c2c; padding-left: 2px; }
.search input { flex: 1; }
.win { align-self: flex-start; display: flex; margin: 0 4px 0 9px; border: 1px solid #222; border-top: 0; border-radius: 0 0 4px 4px; height: 19px; background: linear-gradient(#4a4a4a, #333); }
.win button { width: 27px; border-left: 1px solid #222; }
.win button:first-child { border: 0; }
.win .close { width: 46px; }

/* control bar */
.control { flex: none; height: 34px; display: flex; align-items: center; border-top: 1px solid #5a5a5a; border-bottom: 1px solid #2a2a2a; padding: 0 16px 2px 5px; }
.dots { width: 3px; height: 20px; background: repeating-linear-gradient(#222 0 1px, #555 1px 2px); }
.kind { width: 87px; padding-left: 7px; font-weight: 700; }
.drop, .combo { display: inline-flex; flex: none; height: 19px; border: 1px solid #2b2b2b; background: #a2a2a2; }
.drop button, .combo button { flex: none; width: 15px; background: linear-gradient(#666, #505050); border-left: 1px solid #2b2b2b; }
.combo input { flex: 1; width: 100%; padding: 0 2px; color: #111; }
.strokepick { margin-left: 7px; }
.link { margin-left: 12px; color: #e08a2c; text-decoration: none; border-bottom: 1px dotted #e08a2c; line-height: 12px; font-weight: 600; }
.weight { width: 80px; margin-left: 6px; }
.combo .spin { width: 17px; border-left: 0; border-right: 1px solid #2b2b2b; }
.profile { width: 107px; margin-left: 7px; }
.off, .combo.off { background: #757575; border-color: #333; }
.off .c { color: #858585; }
.off button { background: #5c5c5c; }
.brush { width: 104px; margin-left: 7px; }
.brushface { flex: 1; display: flex; align-items: center; gap: 4px; padding-left: 5px; background: #e6e6e6; color: #222; }
.brushface i { width: 49px; height: 3px; background: #000; }
.control .brush + .link { margin-left: 7px; }
.opacity { width: 68px; margin-left: 6px; }
.lbl { font-weight: 600; }
.stil { margin: 0 8px 0 6px; }
.style i { width: 17px; background: #e4e4e4; }
.rule { width: 2px; height: 26px; border-left: 1px solid #333; border-right: 1px solid #5a5a5a; }
.style + .rule { margin-left: 6px; }
.wheel { margin: 0 10px; }
.alignto { margin: 0 11px; }
.control .transform { margin: 0 7px; }
.isolate { margin-left: 10px; }
.similar { margin-left: 14px; }
.ctlmenu { margin-left: auto; }

/* workspace */
.work { flex: 1; min-height: 0; display: flex; background: #282828; }
.strip { flex: none; height: 12px; display: flex; align-items: center; justify-content: flex-end; padding-right: 4px; background: #333; border-bottom: 1px solid #262626; }
.strip.left { justify-content: flex-start; padding-left: 4px; }

.tools { flex: none; width: 72px; background: #4a4a4a; border-left: 1px solid #2a2a2a; display: flex; flex-direction: column; }
.handle { width: 19px; height: 5px; margin: 2px 0 9px 25px; background: repeating-linear-gradient(90deg, #222 0 1px, #555 1px 2px); }
.toolgrid { display: grid; grid-template-columns: 30px 31px; grid-auto-rows: 24px; margin: 0 5px; border-bottom: 2px solid #414141; }
.toolgrid button svg { width: 20px; height: 20px; }
.toolgrid .on { background: #303030; margin: 2px 1px; }
.toolgrid .more { background: linear-gradient(135deg, transparent 50%, #ddd 50%) right 2px bottom 1px / 4px 4px no-repeat; }
.fillstroke { margin: 3px 0 5px 5px; }
.paints { display: flex; margin: 0 7px 7px 6px; border: 1px solid #2a2a2a; height: 18px; }
.paints button { flex: 1; background: #5a5a5a; border-left: 1px solid #333; }
.paints button:first-child { border-left: 0; }
.paints button.sel { background: #333; }
.paints i { width: 13px; height: 13px; border: 1px solid #111; }
.modes { height: 17px; }
.black { background: #000; }
.white { background: #fff; }
.grad { background: linear-gradient(90deg, #fff, #444); }
.screen { margin: 0 0 0 23px; align-self: flex-start; }

.doc { flex: 1; min-width: 0; display: flex; flex-direction: column; margin-left: 2px; }
.doctabs { flex: none; height: 20px; background: linear-gradient(#262626, #333); }
.doctab { display: inline-flex; align-items: center; height: 20px; background: #484848; padding: 0 6px 0 9px; font: 500 11px/16px "Noto Sans", sans-serif; color: #d4d4d4; gap: 14px; }
.doctab button { font-size: 14px; width: 10px; }
.view { flex: 1; min-height: 0; display: flex; }
.canvas { flex: 1; position: relative; overflow: hidden; background: #fff; }
.art { position: absolute; left: 177px; top: 0; }
.vscroll { width: 17px; background: #343434; display: flex; flex-direction: column; align-items: center; justify-content: space-between; padding: 6px 0; }
.vscroll i { width: 15px; height: 15px; margin-bottom: 12px; background: #999; }
.status { position: relative; flex: none; height: 15px; overflow: hidden; display: flex; align-items: flex-start; background: #464646; border-top: 1px solid #2c2c2c; }
.s1 { margin-left: 6px; }
.s2 { margin: 0 10px; }
.status .combo { height: 18px; }
.status .combo button { width: 13px; }
.zoomf { width: 67px; }
.pagef { width: 57px; }
.nav { margin: 0 9px; }
.tool { flex: 1; text-align: center; border-left: 1px solid #383838; border-right: 1px solid #383838; }
.hscroll { width: 308px; height: 15px; background: #343434; display: flex; align-items: center; justify-content: space-between; padding: 0 5px 0 4px; margin-right: 17px; }
.hscroll i { width: 15px; height: 15px; background: #999; }
.cursor { position: absolute; right: 181px; top: 3px; }

/* panels */
.col { flex: none; display: flex; flex-direction: column; background: #4a4a4a; }
.colA { width: 231px; margin-left: 2px; }
.colB { width: 240px; margin: 0 1px 0 2px; }
.panel { flex: none; border-bottom: 3px solid #292929; }
.tabs { height: 17px; display: flex; background: linear-gradient(#2a2a2a, #363636); border-bottom: 1px solid #333; }
.tab { gap: 2px; padding: 0 7px; font: 600 10px/16px "Open Sans", sans-serif; color: #929292; border-right: 1px solid #292929; }
.tab.act { height: 17px; background: #4a4a4a; color: #e4e4e4; }
.tab.act:has(svg) { padding-left: 5px; }
.pm { margin: 0 5px 0 auto; }
.body { position: relative; }
.grip { position: absolute; right: 2px; bottom: 2px; }
.row { display: flex; height: 20px; align-items: center; }
.row svg { width: 18px; height: 18px; }

.align { padding: 4px 5px 8px; }
.split { justify-content: space-between; margin: 5px 4px 7px; }
.split > div { display: flex; gap: 18px; }
.align hr { margin: 0 0 4px; }
.align .split:last-child { margin-bottom: 0; }

.path { padding: 4px 5px 8px; }
.shapes { gap: 19px; margin: 5px 0 0 3px; }
.expand { flex: none; width: 69px; height: 18px; border: 1px solid #353535; color: #858585; background: #515151; }
.path .second { margin-top: 7px; }
.finders { gap: 19px; margin: 4px 0 0 7px; }

.trans { padding: 7px 5px 4px; }
.tgrid { display: grid; grid-template-columns: 20px 19px 56px 14px 56px 20px; column-gap: 4px; row-gap: 7px; align-items: center; }
.tgrid > label, .gform > label, .dimlbl { display: flex; justify-content: flex-end; align-items: center; font-weight: 600; }
.tgrid > input { height: 19px; width: 56px; background: #a2a2a2; border: 1px solid #2b2b2b; color: #111; padding: 0 2px; }
.ref { grid-row: 1 / span 2; }
.chain { grid-row: 1 / span 2; grid-column: 6; justify-self: end; }
.tgrid > label[for="fa"] { grid-column: 2; }
.trans hr { margin-top: 6px; }
.empty { padding: 64px 6px 56px 0; text-align: center; color: #8c8c8c; }
.checks { margin-top: 4px; display: flex; flex-direction: column; gap: 4px; }
.checks label { display: flex; align-items: center; gap: 4px; font-weight: 500; }
.checks input { appearance: none; width: 12px; height: 12px; margin-left: 1px; border: 1px solid #2a2a2a; background: linear-gradient(#626262, #525252); }

.color { padding: 9px 6px 6px; }
.chips { display: flex; width: 39px; height: 14px; gap: 1px; padding: 1px 0; background: #222; }
.chips i { width: 12px; }
.spectrum { margin: 10px 11px 0 0; height: 31px; border: 1px solid #2a2a2a; background: linear-gradient(#fff, rgba(255,255,255,0) 55%, rgba(0,0,0,0) 60%, #000), linear-gradient(90deg, #e82020, #f0e020 16%, #60b830 32%, #20a840 42%, #30b8e8 54%, #2048a8 66%, #6838a0 80%, #e01080 92%, #e01020); }

.swatches { padding: 6px 6px 4px; }
.swtop { display: flex; justify-content: space-between; height: 36px; }
.views { display: flex; height: 22px; margin-top: 1px; border: 1px solid #2a2a2a; }
.views button { width: 24px; background: #5a5a5a; }
.views .sel { background: #333; width: 25px; }
.swwrap { display: flex; justify-content: space-between; height: 50px; border: solid #333; border-width: 1px 0; overflow: hidden; }
.swgrid { display: grid; grid-template-columns: repeat(15, 13px); grid-auto-rows: 13px; gap: 1px; }
.swscroll { width: 12px; background: #383838; display: flex; flex-direction: column; align-items: center; justify-content: space-between; padding: 5px 0 4px; }
.swscroll i { width: 11px; height: 12px; background: #999; margin-bottom: 8px; }
.k1 { background: #fff; } .k2 { background: #000; } .k3 { background: #e30613; } .k4 { background: #ffed00; } .k5 { background: #009640; } .k6 { background: #009fe3; } .k7 { background: #312783; } .k8 { background: #e6007e; } .k9 { background: #be1622; } .k10 { background: #e6332a; } .k11 { background: #e94e1b; } .k12 { background: #f39200; } .k13 { background: #f9b233; }
.k14 { background: #fcea10; } .k15 { background: #dedc00; } .k16 { background: #95c11f; } .k17 { background: #3aaa35; } .k18 { background: #0d9133; } .k19 { background: #006633; } .k20 { background: #2fac66; } .k21 { background: #13a199; } .k22 { background: #36a9e1; } .k23 { background: #1071b8; } .k24 { background: #2d2e83; } .k25 { background: #29235c; } .k26 { background: #662483; } .k27 { background: #951b81; } .k28 { background: #a3195b; }
.k29 { background: #d60b51; } .k30 { background: #e71d73; } .k31 { background: #cbbba0; } .k32 { background: #a48a7b; } .k33 { background: #7b6a58; } .k34 { background: #634e42; } .k35 { background: #ca9e67; } .k36 { background: #b17f4a; } .k37 { background: #936037; } .k38 { background: #7d4e24; } .k39 { background: #683c11; } .k40 { background: #432918; } .k41 { background: linear-gradient(90deg, #fff, #222); } .k42 { background: linear-gradient(90deg, #fce010, #ee6010); } .k43 { background: linear-gradient(90deg, #2878c8, #d0e8f8); }
.foot { display: flex; align-items: center; justify-content: space-between; margin: 5px 21px 0 2px; height: 12px; }

.gradient { padding: 7px 6px 6px; }
.gtop { display: flex; justify-content: space-between; }
.gprev { display: flex; align-items: center; gap: 5px; margin-bottom: 7px; }
.gprev i { width: 30px; height: 30px; border: 1px solid #222; background: linear-gradient(90deg, #fff, #222); }
.rev { margin: 11px 0 0 7px; }
.gform { display: grid; grid-template-columns: 36px 142px; column-gap: 5px; row-gap: 7px; align-items: center; }
.gform .combo { width: 69px; }
.sel-wrap { display: flex; align-items: center; height: 19px; border: 1px solid #2b2b2b; background: linear-gradient(#606060, #505050); padding-right: 4px; }
.sel-wrap select { appearance: none; flex: 1; padding-left: 5px; height: 17px; margin-right: 4px; border-right: 1px solid #777; font-weight: 600; }
.three { display: flex; width: 70px; height: 19px; border: 1px solid #373737; }
.three button { flex: 1; border-left: 1px solid #373737; }
.dimlbl { color: #888; }
.slider { position: relative; padding: 6px 0 27px 4px; }
.diamond { margin: 0 0 0 93px; }
.barrow { display: flex; justify-content: space-between; align-items: center; padding-right: 6px; }
.bar { width: 196px; height: 19px; border: 1px solid #222; background: linear-gradient(90deg, #fff, #989793 50%, #000 98%); }
.hot { position: absolute; top: 29px; width: 30px; height: 30px; display: flex; justify-content: center; padding-top: 5px; background: rgba(205, 20, 28, .78); }
.hot.a { left: -8px; }
.hot.b { left: 183px; }
.low { justify-content: end; }

.layers { flex: 1; display: flex; flex-direction: column; border: 0; }
.lay { flex: 1; display: flex; flex-direction: column; padding: 6px 6px 0; }
.laylist { flex: 1; border: 1px solid #2c2c2c; }
.layer { display: flex; align-items: center; height: 21px; background: #5a6474; border-bottom: 1px solid #333; }
.eye { width: 20px; display: flex; justify-content: center; }
.lock { width: 22px; align-self: stretch; border: solid #3c434e; border-width: 0 1px; }
.tint { width: 5px; align-self: stretch; background: #4f80ec; border-right: 1px solid #333; }
.tw { margin: 0 10px 0 6px; }
.lname { flex: 1; padding-left: 5px; font-size: 11px; font-weight: 600; }
.target { align-self: stretch; border-left: 1px solid #3c434e; padding-left: 4px; }
.layfoot { height: 19px; padding-right: 21px; display: flex; align-items: center; gap: 14px; }
.layfoot span { flex: 1; }
```
